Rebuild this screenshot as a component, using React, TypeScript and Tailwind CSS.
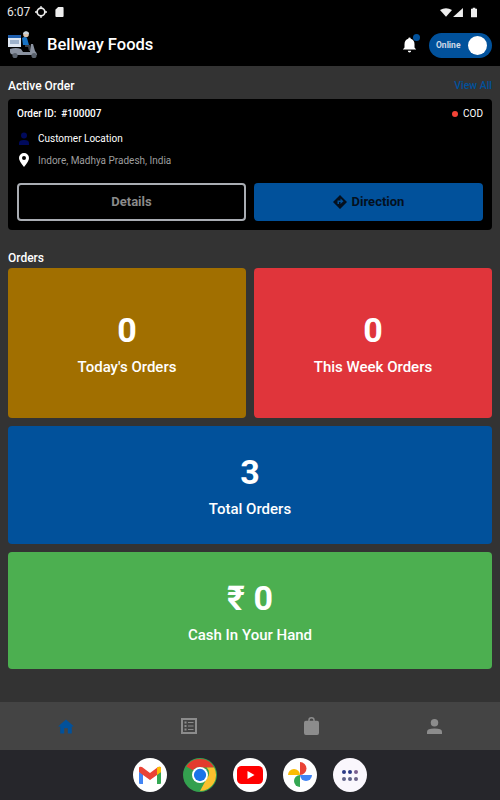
import React from "react";

function Rider() {
  return (
    <svg width="32" height="28" viewBox="0 0 32 28" className="shrink-0">
      <rect x="1" y="5" width="13" height="11" fill="#dfe7f2" />
      <rect x="1" y="4" width="13" height="3" fill="#1f5fae" />
      <rect x="3" y="9" width="9" height="4" fill="#9fb3cc" />
      <circle cx="19" cy="3.500" r="2.800" fill="#d9c3ad" />
      <path d="M16 3 a3.200 3.200 0 0 1 6 -1 l-.3 1z" fill="#c9d3dc" />
      <path d="M15 7 q3 -2 5 0 l2 7 h-6z" fill="#1772c4" />
      <path d="M18 14 l5 0 l1 6 h-2 l-1 -4 h-3z" fill="#3b3f46" />
      <path d="M3 18 q6 -2 11 0 l2 3 h7 l1 -8 h2 l2 7 q2 2 2 4 H9 q-6 0 -6 -3z" fill="#8a92a0" />
      <circle cx="8" cy="24.500" r="2.600" fill="#59616c" />
      <circle cx="27" cy="24.500" r="2.600" fill="#59616c" />
    </svg>
  );
}

function StatCard({ value, label, className }: { value: string; label: string; className: string }) {
  return (
    <div className={`flex flex-col items-center justify-center rounded pt-[2px] text-white ${className}`}>
      <div className="text-[34px] leading-[40px] font-bold">{value}</div>
      <div className="mt-[6px] text-[15px] leading-[22px] font-medium">{label}</div>
    </div>
  );
}

function Gmail() {
  return (
    <svg width="24" height="20" viewBox="0 0 24 20">
      <path d="M1 7 v11 q0 1 1 1 h3 V8z" fill="#4285f4" />
      <path d="M19 8 v11 h3 q1 0 1 -1 V7z" fill="#34a853" />
      <path d="M1 3 q0 -2 3 -1 l8 6 l8 -6 q3 -1 3 1 v4 l-4 3 l-7 5 l-7 -5 l-4 -3z" fill="#ea4335" />
      <path d="M19 3 l1 -1 q3 -1 3 1 v4 l-4 3z" fill="#fbbc04" />
    </svg>
  );
}

function Chrome() {
  return (
    <svg width="36" height="36" viewBox="0 0 36 36">
      <circle cx="18" cy="18" r="17" fill="#34a04f" />
      <path d="M18 1 A17 17 0 0 1 33 10 H18 A8 8 0 0 0 10.500 13 L3.500 9 A17 17 0 0 1 18 1z" fill="#e33b2e" />
      <path d="M33 10 A17 17 0 0 1 18 35 L25 22 A8 8 0 0 0 25 10z" fill="#fbc02d" />
      <circle cx="18" cy="18" r="8.500" fill="#fff" />
      <circle cx="18" cy="18" r="6.500" fill="#1a73e8" />
    </svg>
  );
}

function Youtube() {
  return (
    <svg width="26" height="18" viewBox="0 0 26 18">
      <rect width="26" height="18" rx="4.500" fill="#f00" />
      <path d="M10.500 5 L17.500 9 L10.500 13z" fill="#fff" />
    </svg>
  );
}

function Photos() {
  return (
    <svg width="26" height="26" viewBox="0 0 26 26">
      <path d="M13 13 H1 A6 6 0 0 1 13 13z" fill="#fbbc04" />
      <path d="M13 13 V0 A6.500 6.500 0 0 1 13 13z" fill="#ea4335" />
      <path d="M13 13 H25 A6 6 0 0 1 13 13z" fill="#4285f4" />
      <path d="M13 13 V25 A6 6 0 0 1 13 13z" fill="#34a853" />
    </svg>
  );
}

function Apps() {
  const colors = ["#2b3a86", "#2b3a86", "#7a5f8f", "#5f6288", "#5f6288", "#6a6288"];
  return (
    <div className="grid grid-cols-3 gap-x-[2px] gap-y-[3px]">
      {colors.map((c, i) => (
        <svg key={i} width="4" height="4" viewBox="0 0 4 4">
          <circle cx="2" cy="2" r="2" fill={c} />
        </svg>
      ))}
    </div>
  );
}

function DockIcon({ children, className = "bg-white" }: { children: React.ReactNode; className?: string }) {
  return (
    <div className={`flex h-[34px] w-[34px] items-center justify-center overflow-hidden rounded-full ${className}`}>
      {children}
    </div>
  );
}

export default function App() {
  return (
    <div
      className="flex h-[800px] w-[500px] flex-col overflow-hidden bg-[#333333] text-white"
      style={{ fontFamily: "Roboto, sans-serif" }}
    >
      {/* status bar */}
      <div className="flex h-[24px] items-center justify-between bg-black pr-[23px] pl-[7px] text-[#e8e8e8]">
        <div className="flex items-center gap-[5px]">
          <span className="text-[12px] leading-none">6:07</span>
          <svg width="12" height="12" viewBox="0 0 14 14" fill="none" stroke="#eee">
            <circle cx="7" cy="7" r="4.500" strokeWidth="2" />
            <path d="M7 0 v3 M7 11 v3 M0 7 h3 M11 7 h3" strokeWidth="1.500" />
          </svg>
          <svg width="9" height="10" viewBox="0 0 9 11" className="ml-[3px]">
            <path d="M3 0 h5 q1 0 1 1 v9 q0 1 -1 1 h-7 q-1 0 -1 -1 v-7z" fill="#eee" />
          </svg>
        </div>
        <div className="flex items-center gap-[1px]">
          <svg width="12" height="9" viewBox="0 0 14 10">
            <path d="M0 2 Q7 -2 14 2 L7 10z" fill="#eee" />
          </svg>
          <svg width="10" height="9" viewBox="0 0 11 10">
            <path d="M11 0 V10 H0z" fill="#eee" />
          </svg>
          <svg width="6" height="11" viewBox="0 0 7 11" className="ml-[7px]">
            <path d="M2 0 h3 v1 h2 v10 h-7 v-10 h2z" fill="#eee" />
          </svg>
        </div>
      </div>

      {/* header */}
      <div className="flex h-[42px] items-center justify-between bg-black pr-[8px] pl-[7px]">
        <div className="flex items-center gap-[8px]">
          <Rider />
          <span className="text-[16.500px] font-medium">Bellway Foods</span>
        </div>
        <div className="flex items-center gap-[12px]">
          <div className="relative h-[18px] w-[15px]">
            <svg width="15" height="18" viewBox="0 0 18 20">
              <path d="M9 1 q1.500 0 1.500 1.500 Q15 4 15 9 v4 l2 2.500 H1 L3 13 V9 Q3 4 7.500 2.500 Q7.500 1 9 1z M7 17 h4 q0 2 -2 2 t-2 -2z" fill="#fff" />
            </svg>
            <span className="absolute top-[-2px] right-[-3px] h-[7px] w-[7px] rounded-full bg-[#01519b]" />
          </div>
          <div className="flex h-[25px] w-[63px] items-center justify-between rounded-full bg-[#01519b] pr-[5px] pl-[7px]">
            <span className="text-[8.500px] font-bold text-[#cfd9e8]">Online</span>
            <span className="h-[19px] w-[19px] rounded-full bg-white" />
          </div>
        </div>
      </div>

      {/* content */}
      <div className="flex flex-1 flex-col px-[8px]">
        <div className="flex h-[33px] items-end justify-between pb-[6px]">
          <span className="text-[12px] leading-[14px] font-medium">Active Order</span>
          <span className="text-[10.500px] leading-[14px] font-medium text-[#01519b]">View All</span>
        </div>

        <div className="h-[131px] rounded bg-black px-[9px] pt-[8px]">
          <div className="flex items-center justify-between text-[10px] leading-[14px]">
            <span className="font-medium">Order ID:&nbsp; #100007</span>
            <span className="flex items-center gap-[5px]">
              <span className="h-[6px] w-[6px] rounded-full bg-[#f44336]" />
              COD
            </span>
          </div>
          <div className="mt-[10px] flex h-[14px] items-center gap-[7px] text-[10px]">
            <svg width="12" height="13" viewBox="0 0 12 13" className="ml-[1px]">
              <circle cx="6" cy="3.500" r="3" fill="#000a5c" />
              <path d="M1 13 v-2 q0 -3 5 -3 t5 3 v2z" fill="#000a5c" />
            </svg>
            <span className="ml-[1px]">Customer Location</span>
          </div>
          <div className="mt-[8px] flex h-[14px] items-center gap-[7px] text-[10px] text-[#9e9e9e]">
            <svg width="12" height="14" viewBox="0 0 12 14" className="ml-[1px]">
              <path fillRule="evenodd" d="M6 0 a5 5 0 0 1 5 5 q0 3 -5 9 q-5 -6 -5 -9 a5 5 0 0 1 5 -5z M6 3 a2 2 0 1 0 0 4 a2 2 0 0 0 0 -4z" fill="#fff" />
            </svg>
            <span className="ml-[1px]">Indore, Madhya Pradesh, India</span>
          </div>
          <div className="mt-[16px] grid grid-cols-2 gap-[8px]">
            <div className="flex h-[38px] items-center justify-center rounded border-2 border-[#a9adb3] text-[13px] font-bold text-[#8a8a8a]">
              Details
            </div>
            <div className="flex h-[38px] items-center justify-center gap-[5px] rounded bg-[#01519b] text-[13px] font-bold text-[#04101f]">
              <svg width="14" height="14" viewBox="0 0 14 14">
                <path fillRule="evenodd" d="M7 0 L14 7 L7 14 L0 7z M7.500 3.500 V5.500 H4.500 V9 H6 V7 H7.500 V9 L10.500 6.200z" fill="#04101f" />
              </svg>
              Direction
            </div>
          </div>
        </div>

        <div className="mt-[21px] text-[12px] leading-[14px] font-medium">Orders</div>

        <div className="mt-[3px] grid grid-cols-2 gap-[8px]">
          <StatCard value="0" label="Today's Orders" className="h-[150px] bg-[#a16f00]" />
          <StatCard value="0" label="This Week Orders" className="h-[150px] bg-[#e0353b]" />
        </div>
        <StatCard value="3" label="Total Orders" className="mt-[8px] h-[118px] bg-[#01519b]" />
        <StatCard value="₹ 0" label="Cash In Your Hand" className="mt-[8px] h-[117px] bg-[#4caf50]" />
      </div>

      {/* bottom nav */}
      <div className="grid h-[48px] grid-cols-4 items-center justify-items-center bg-[#444444] px-[4px]">
        <svg width="16" height="15" viewBox="0 0 18 16">
          <path d="M9 0 L18 8 H15.500 V16 H11 V10 H7 V16 H2.500 V8 H0z" fill="#01519b" />
        </svg>
        <svg width="16" height="16" viewBox="0 0 16 16">
          <path fillRule="evenodd" d="M0 0 H16 V16 H0z M2 2 V14 H14 V2z" fill="#8c8c8c" />
          <path d="M3.500 3.500 h2 v2 h-2z M7 4 h5.500 v1 H7z M3.500 7 h2 v2 h-2z M7 7.500 h5.500 v1 H7z M3.500 10.500 h2 v2 h-2z M7 11 h5.500 v1 H7z" fill="#8c8c8c" />
        </svg>
        <svg width="15" height="18" viewBox="0 0 16 19">
          <path fillRule="evenodd" d="M4.500 4 V3.500 a3.500 3.500 0 0 1 7 0 V4 H14 q2 0 2 2 V17 q0 2 -2 2 H2 q-2 0 -2 -2 V6 q0 -2 2 -2z M6 4 H10 V3.500 a2 2 0 0 0 -4 0z" fill="#8c8c8c" />
        </svg>
        <svg width="15" height="15" viewBox="0 0 16 16">
          <circle cx="8" cy="4" r="4" fill="#8c8c8c" />
          <path d="M0 16 V13.500 Q0 10 8 10 T16 13.500 V16z" fill="#8c8c8c" />
        </svg>
      </div>

      {/* dock */}
      <div className="flex h-[50px] items-center justify-center gap-[16px] bg-[#26262b]">
        <DockIcon><Gmail /></DockIcon>
        <DockIcon className="bg-[#34a04f]"><Chrome /></DockIcon>
        <DockIcon><Youtube /></DockIcon>
        <DockIcon><Photos /></DockIcon>
        <DockIcon className="bg-[#faf7fd]"><Apps /></DockIcon>
      </div>
    </div>
  );
}
